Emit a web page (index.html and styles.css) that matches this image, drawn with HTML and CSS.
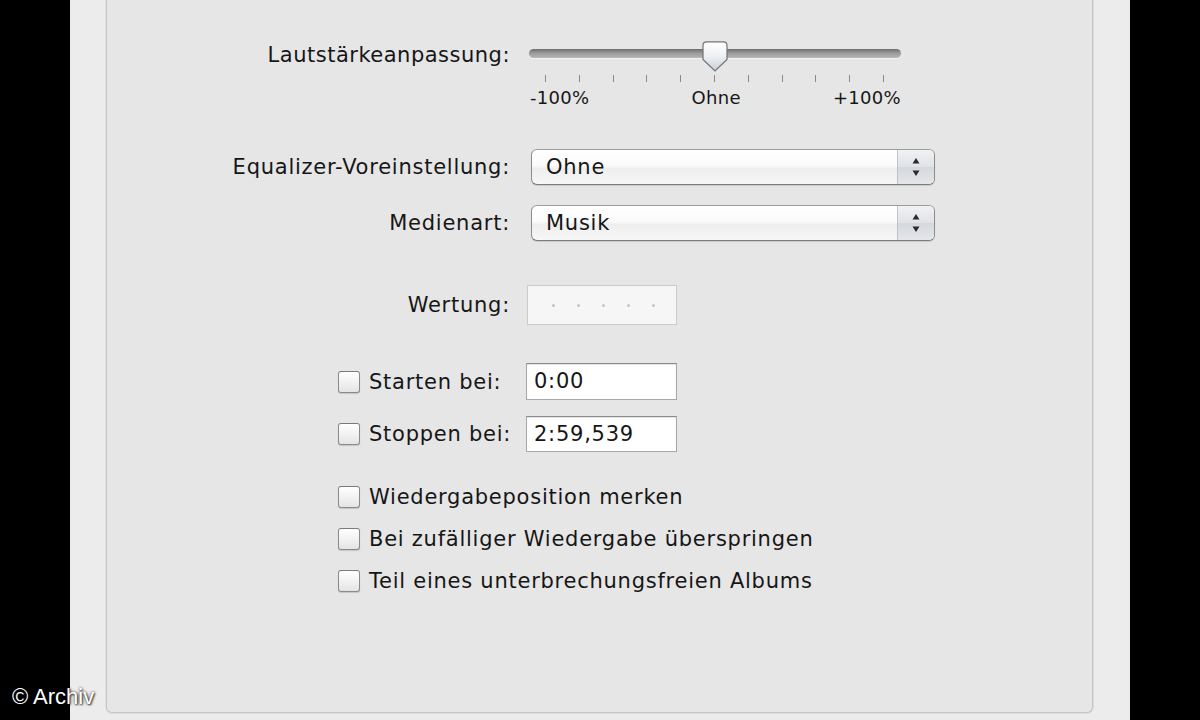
FILE: index.html
```html
<!DOCTYPE html>
<html lang="de">
<head>
<meta charset="utf-8">
<title>Optionen</title>
<link rel="stylesheet" href="styles.css">
</head>
<body>
<div class="frame">
  <div class="panel">
    <div class="row row-slider">
      <div class="label">Lautstärkeanpassung:</div>
      <div class="slider">
        <div class="track"></div>
        <svg class="thumb" width="26" height="31" viewBox="0 0 26 31">
          <defs>
            <linearGradient id="tg" x1="0" y1="0" x2="0" y2="1">
              <stop offset="0" stop-color="#ffffff"/>
              <stop offset="0.5" stop-color="#eef0f3"/>
              <stop offset="1" stop-color="#c9ced6"/>
            </linearGradient>
          </defs>
          <path d="M4.5 0.8 H21.5 Q25 0.8 25 4.5 V18.5 L13 30 L1 18.5 V4.5 Q1 0.8 4.5 0.8 Z" fill="url(#tg)" stroke="#6f7277" stroke-width="1.2"/>
        </svg>
        <div class="ticks">
          <span></span><span></span><span></span><span></span><span></span><span></span><span></span><span></span><span></span><span></span><span></span>
        </div>
        <div class="scale">
          <span>-100%</span><span>Ohne</span><span>+100%</span>
        </div>
      </div>
    </div>

    <div class="row row-select1">
      <div class="label">Equalizer-Voreinstellung:</div>
      <div class="select">
        <span class="select-text">Ohne</span>
        <span class="stepper">
          <svg width="10" height="22" viewBox="0 0 10 22"><path d="M5 2 L8.5 7.5 H1.5 Z M5 20 L8.5 14.5 H1.5 Z" fill="#2a2a2a"/></svg>
        </span>
      </div>
    </div>

    <div class="row row-select2">
      <div class="label">Medienart:</div>
      <div class="select">
        <span class="select-text">Musik</span>
        <span class="stepper">
          <svg width="10" height="22" viewBox="0 0 10 22"><path d="M5 2 L8.5 7.5 H1.5 Z M5 20 L8.5 14.5 H1.5 Z" fill="#2a2a2a"/></svg>
        </span>
      </div>
    </div>

    <div class="row row-rating">
      <div class="label">Wertung:</div>
      <div class="rating">
        <span class="dot"></span><span class="dot"></span><span class="dot"></span><span class="dot"></span><span class="dot"></span>
      </div>
    </div>

    <div class="row row-start">
      <div class="label label-left"><span class="check"></span><span>Starten bei:</span></div>
      <div class="field">0:00</div>
    </div>

    <div class="row row-stop">
      <div class="label label-left"><span class="check"></span><span>Stoppen bei:</span></div>
      <div class="field">2:59,539</div>
    </div>

    <div class="options">
      <div class="option"><span class="check"></span><span>Wiedergabeposition merken</span></div>
      <div class="option"><span class="check"></span><span>Bei zufälliger Wiedergabe überspringen</span></div>
      <div class="option"><span class="check"></span><span>Teil eines unterbrechungsfreien Albums</span></div>
    </div>
  </div>
</div>
<div class="watermark">© Archiv</div>
</body>
</html>
```

FILE: styles.css
```css
html, body {
  margin: 0;
  padding: 0;
  background: #000;
  width: 1200px;
  height: 720px;
  overflow: hidden;
}

body {
  position: relative;
  font-family: "DejaVu Sans", "Verdana", sans-serif;
  color: #161616;
}

.frame {
  margin-left: 70px;
  width: 1060px;
  height: 720px;
  background: #ececec;
  overflow: hidden;
}

.panel {
  margin-left: 36px;
  width: 985px;
  height: 672px;
  background: #e6e6e6;
  border: 1px solid #c6c6c6;
  border-top: none;
  border-radius: 0 0 6px 6px;
  box-shadow: 1px 0 0 #d9d9d9, -1px 0 0 #e0e0e0, 0 1px 0 #dcdcdc;
  padding-top: 40px;
  box-sizing: content-box;
}

.row {
  display: flex;
  align-items: center;
}

.label {
  width: 403px;
  flex: none;
  text-align: right;
  font-size: 21px;
  letter-spacing: 0.75px;
  white-space: nowrap;
}

.label-left {
  text-align: left;
  padding-left: 231px;
  box-sizing: border-box;
  display: flex;
  align-items: center;
  gap: 9px;
}

/* slider */
.row-slider {
  align-items: flex-start;
  height: 70px;
}

.row-slider .label {
  line-height: 30px;
  letter-spacing: 0.5px;
}

.slider {
  position: relative;
  margin-left: 19px;
  width: 372px;
  height: 70px;
}

.track {
  margin-top: 9px;
  height: 9px;
  border-radius: 5px;
  background: linear-gradient(#6e6e6e, #9a9a9a 45%, #b8b8b8);
  box-shadow: 0 1px 0 #f4f4f4;
}

.thumb {
  position: absolute;
  left: 173px;
  top: 1px;
}

.ticks {
  margin-top: 17px;
  margin-left: 16px;
  width: 339px;
  height: 7px;
  display: flex;
  justify-content: space-between;
}

.ticks span {
  width: 1px;
  height: 7px;
  background: #8a8a8a;
}

.scale {
  margin-top: 5px;
  display: flex;
  justify-content: space-between;
  font-size: 18px;
  letter-spacing: 0.3px;
  line-height: 22px;
  padding-left: 1px;
}

.scale span:nth-child(2) {
  margin-left: 10px;
}

/* selects */
.row-select1 {
  margin-top: 39px;
}

.row-select2 {
  margin-top: 20px;
}

.select {
  margin-left: 21px;
  width: 404px;
  height: 36px;
  box-sizing: border-box;
  border: 1px solid #8d8d8d;
  border-top-color: #9d9d9d;
  border-bottom-color: #7c7c7c;
  border-radius: 6px;
  background: linear-gradient(#ffffff, #fbfbfb 45%, #eeeeee 55%, #f7f7f7);
  box-shadow: 0 1px 1px rgba(0,0,0,0.12);
  display: flex;
  align-items: center;
  overflow: hidden;
}

.select-text {
  flex: 1;
  padding-left: 14px;
  font-size: 21px;
  letter-spacing: 0.75px;
}

.stepper {
  width: 36px;
  height: 100%;
  border-left: 1px solid #bfc2c6;
  background: linear-gradient(#f1f2f4, #e0e2e6 50%, #d5d8dd 51%, #e4e6e9);
  display: flex;
  align-items: center;
  justify-content: center;
}

/* rating */
.row-rating {
  margin-top: 44px;
}

.rating {
  margin-left: 17px;
  width: 150px;
  height: 40px;
  box-sizing: border-box;
  border: 1px solid #cbcbcb;
  background: #f6f6f6;
  display: flex;
  align-items: center;
  padding-left: 24px;
  gap: 22px;
}

.dot {
  width: 3px;
  height: 3px;
  border-radius: 50%;
  background: #c4c4c4;
}

/* start / stop */
.row-start {
  margin-top: 38px;
}

.row-stop {
  margin-top: 16px;
}

.field {
  margin-left: 16px;
  width: 151px;
  height: 37px;
  box-sizing: border-box;
  border: 1px solid #a7a7a7;
  border-top-color: #8c8c8c;
  background: #ffffff;
  box-shadow: inset 0 1px 1px rgba(0,0,0,0.12);
  font-size: 21px;
  letter-spacing: 0.75px;
  padding-left: 7px;
  line-height: 35px;
}

.row-stop .field {
  height: 36px;
  line-height: 34px;
}

.check {
  flex: none;
  width: 22px;
  height: 22px;
  box-sizing: border-box;
  border: 1px solid #8a8a8a;
  border-top-color: #7a7a7a;
  border-radius: 3px;
  background: linear-gradient(#ffffff, #f2f2f2 50%, #e4e4e4);
  box-shadow: 0 1px 1px rgba(0,0,0,0.15);
}

/* options */
.options {
  margin-top: 34px;
  padding-left: 231px;
  display: flex;
  flex-direction: column;
  gap: 20px;
}

.option {
  display: flex;
  align-items: center;
  gap: 9px;
  height: 22px;
  font-size: 21px;
  letter-spacing: 0.75px;
  white-space: nowrap;
}

/* watermark overlay */
.watermark {
  position: absolute;
  left: 12px;
  top: 684px;
  font-family: "Liberation Sans", Arial, sans-serif;
  font-size: 22px;
  color: #ffffff;
  text-shadow: 0 0 3px rgba(0,0,0,0.8), 1px 1px 2px rgba(0,0,0,0.7);
  white-space: nowrap;
}
```
